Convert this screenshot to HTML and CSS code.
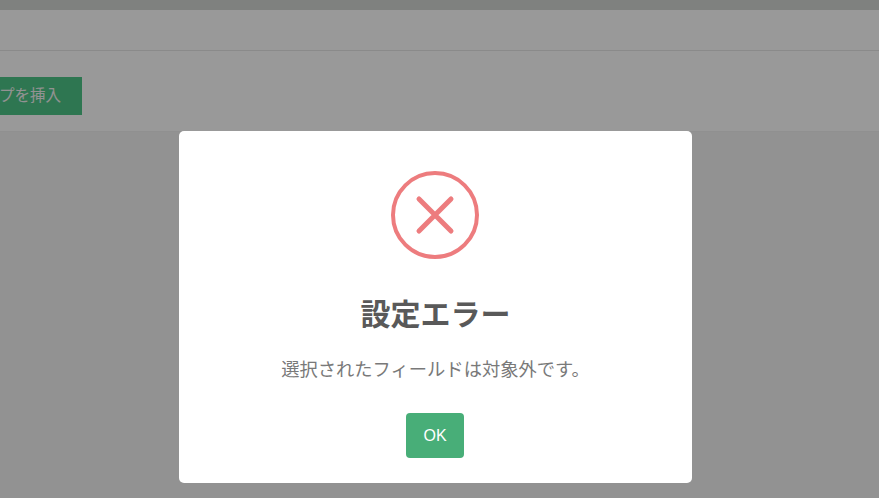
FILE: index.html
```html
<!DOCTYPE html>
<html lang="ja">
<head>
<meta charset="utf-8">
<title>設定エラー</title>
<link rel="stylesheet" href="styles.css">
</head>
<body>
<div class="page">
  <div class="topbar"></div>
  <div class="titlebar"></div>
  <div class="toolbar">
    <button class="insert-btn" type="button">ップを挿入</button>
  </div>
  <div class="content"></div>
</div>
<div class="overlay">
  <div class="modal" role="dialog">
    <svg class="icon" width="88" height="88" viewBox="0 0 88 88" aria-hidden="true">
      <circle cx="44" cy="44" r="42" fill="none" stroke="#ed7c7e" stroke-width="4"/>
      <path d="M28 28 L60 60 M60 28 L28 60" fill="none" stroke="#ed7c7e" stroke-width="5" stroke-linecap="round"/>
    </svg>
    <h2 class="title">設定エラー</h2>
    <p class="text">選択されたフィールドは対象外です。</p>
    <button class="ok" type="button">OK</button>
  </div>
</div>
</body>
</html>
```

FILE: styles.css
```css
* { box-sizing: border-box; }
html, body { margin: 0; height: 100%; overflow: hidden; }
body {
  position: relative;
  font-family: "Liberation Sans", "Noto Sans CJK JP", sans-serif;
}
.page { display: flex; flex-direction: column; height: 100%; background: #f3f3f3; overflow: hidden; }
.topbar { height: 10px; background: #d4d7d4; }
.titlebar { height: 41px; background: #fff; border-bottom: 1px solid #e6e6e6; }
.toolbar {
  height: 81px;
  background: #fff;
  border-bottom: 1px solid #f0f0f0;
  padding-top: 26px;
}
.insert-btn {
  display: block;
  width: 100px;
  height: 38px;
  margin-left: -18px;
  padding: 0 21px 4px 0;
  border: 0;
  background: #4ec587;
  color: #f4f4f4;
  font: 15.5px "Noto Sans CJK JP", sans-serif;
  text-align: right;
  white-space: nowrap;
}
.content { flex: 1; }
.overlay {
  position: absolute;
  inset: 0;
  background: rgba(0, 0, 0, .4);
  display: flex;
  justify-content: center;
  align-items: flex-start;
  padding: 131px 8px 0 0;
}
.modal {
  width: 513px;
  height: 352px;
  background: #fff;
  border-radius: 5px;
  display: flex;
  flex-direction: column;
  align-items: center;
  padding-top: 40px;
}
.icon { display: block; flex: none; margin-right: 1px; }
.title {
  margin: 33px 0 0;
  font: 700 30px/40px "Noto Sans CJK JP", sans-serif;
  color: #595959;
}
.text {
  margin: 23px 0 0;
  font: 400 18.3px/26px "Noto Sans CJK JP", sans-serif;
  color: #797979;
}
.ok {
  margin-top: 32px;
  margin-right: 1px;
  width: 58px;
  height: 45px;
  padding: 0;
  border: 0;
  border-radius: 4px;
  background: #48ae78;
  color: #fff;
  font: 16px "Liberation Sans", sans-serif;
}
```
